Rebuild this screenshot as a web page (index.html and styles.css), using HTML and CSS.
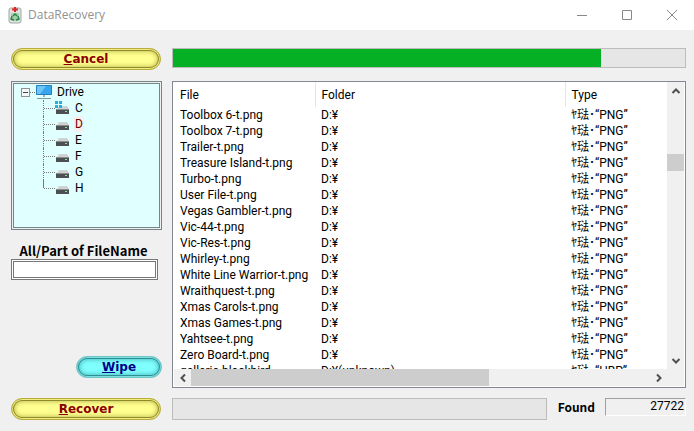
FILE: index.html
```html
<!DOCTYPE html>
<html lang="en">
<head>
    <meta charset="utf-8">
    <title>DataRecovery</title>
    <link rel="stylesheet" href="styles.css">
</head>
<body>
    <header class="titlebar">
        <svg class="app-icon" width="14" height="18" viewBox="0 0 14 18">
            <rect x="1" y="2" width="12" height="15" rx="2" fill="#dfe3df" stroke="#a0a6a1"/>
            <rect x="3" y="7" width="8" height="8" rx="1" fill="#a5cdaa"/>
            <path d="M5 10l2-2 2 2M10 10l1 3-3 1M6 14l-3-1 1-3" fill="none" stroke="#23834a" stroke-width="1.4"/>
            <path d="M7 1v5M4 3.500h6" stroke="#dc2626" stroke-width="2"/>
        </svg>
        <h1>DataRecovery</h1>
        <div class="window-buttons">
            <button aria-label="Minimize"><svg width="12" height="12" viewBox="0 0 12 12"><path d="M1 6.500h10"/></svg></button>
            <button aria-label="Maximize"><svg width="12" height="12" viewBox="0 0 12 12"><path d="M1.500 1.500h9v9h-9z"/></svg></button>
            <button aria-label="Close"><svg width="12" height="12" viewBox="0 0 12 12"><path d="M1 1l10 10M11 1L1 11"/></svg></button>
        </div>
    </header>

    <svg class="defs" width="0" height="0">
        <symbol id="disk" viewBox="0 0 16 14">
            <path d="M4 5h8l2 3H2z" fill="#cfd3d3"/>
            <path d="M1 8h13v5H1z" fill="#4c5052"/>
            <path d="M1 8h13v1H1z" fill="#888e90"/>
            <path d="M10 10h2v1h-2z" fill="#8fe0a0"/>
        </symbol>
    </svg>

    <main>
        <div class="side">
            <button class="pill yellow"><u>C</u>ancel</button>
            <div class="tree">
                <div class="root">
                    <button class="toggle" aria-label="Collapse"></button>
                    <span class="dots"></span>
                    <svg width="18" height="16" viewBox="0 0 18 16">
                        <path d="M1.500 1.500h15v9h-15z" fill="#38a5ed" stroke="#2580b8"/>
                        <path d="M2 2h9L5 10H2z" fill="#6fc6fa"/>
                        <path d="M8 11h2v2H8z" fill="#9fb2bb"/>
                        <path d="M2 14.500h14" stroke="#8098a2"/>
                    </svg>
                    <span class="name">Drive</span>
                </div>
                <ul>
                    <li><span class="dots"></span><svg width="16" height="14"><use href="#disk"/><path d="M0 0h3v3H0zM4 0h3v3H4zM0 4h3v3H0zM4 4h3v3H4z" fill="#25b0dc"/></svg><span class="name">C</span></li>
                    <li><span class="dots"></span><svg width="16" height="14"><use href="#disk"/></svg><span class="name hot">D</span></li>
                    <li><span class="dots"></span><svg width="16" height="14"><use href="#disk"/></svg><span class="name">E</span></li>
                    <li><span class="dots"></span><svg width="16" height="14"><use href="#disk"/></svg><span class="name">F</span></li>
                    <li><span class="dots"></span><svg width="16" height="14"><use href="#disk"/></svg><span class="name">G</span></li>
                    <li><span class="dots"></span><svg width="16" height="14"><use href="#disk"/></svg><span class="name">H</span></li>
                </ul>
            </div>
            <label class="filter-label" for="filter">All/Part of FileName</label>
            <input type="text" id="filter" class="filter">
            <button class="pill cyan"><u>W</u>ipe</button>
            <button class="pill yellow recover"><u>R</u>ecover</button>
        </div>

        <div class="content">
            <progress class="scan" value="83.5" max="100" aria-label="Scan progress"></progress>
            <div class="list">
                <div class="rows">
                    <table>
                        <thead>
                            <tr><th class="file">File</th><th class="folder">Folder</th><th>Type</th></tr>
                        </thead>
                        <tbody>
                            <tr><td>Toolbox 6-t.png</td><td>D:¥</td><td>ﾔ琺･“PNG”</td></tr>
                            <tr><td>Toolbox 7-t.png</td><td>D:¥</td><td>ﾔ琺･“PNG”</td></tr>
                            <tr><td>Trailer-t.png</td><td>D:¥</td><td>ﾔ琺･“PNG”</td></tr>
                            <tr><td>Treasure Island-t.png</td><td>D:¥</td><td>ﾔ琺･“PNG”</td></tr>
                            <tr><td>Turbo-t.png</td><td>D:¥</td><td>ﾔ琺･“PNG”</td></tr>
                            <tr><td>User File-t.png</td><td>D:¥</td><td>ﾔ琺･“PNG”</td></tr>
                            <tr><td>Vegas Gambler-t.png</td><td>D:¥</td><td>ﾔ琺･“PNG”</td></tr>
                            <tr><td>Vic-44-t.png</td><td>D:¥</td><td>ﾔ琺･“PNG”</td></tr>
                            <tr><td>Vic-Res-t.png</td><td>D:¥</td><td>ﾔ琺･“PNG”</td></tr>
                            <tr><td>Whirley-t.png</td><td>D:¥</td><td>ﾔ琺･“PNG”</td></tr>
                            <tr><td>White Line Warrior-t.png</td><td>D:¥</td><td>ﾔ琺･“PNG”</td></tr>
                            <tr><td>Wraithquest-t.png</td><td>D:¥</td><td>ﾔ琺･“PNG”</td></tr>
                            <tr><td>Xmas Carols-t.png</td><td>D:¥</td><td>ﾔ琺･“PNG”</td></tr>
                            <tr><td>Xmas Games-t.png</td><td>D:¥</td><td>ﾔ琺･“PNG”</td></tr>
                            <tr><td>Yahtsee-t.png</td><td>D:¥</td><td>ﾔ琺･“PNG”</td></tr>
                            <tr><td>Zero Board-t.png</td><td>D:¥</td><td>ﾔ琺･“PNG”</td></tr>
                            <tr><td>galleria blackbird</td><td>D:¥(unknown)</td><td>ﾔ琺･“HBP”</td></tr>
                        </tbody>
                    </table>
                </div>
                <div class="vbar">
                    <button aria-label="Scroll up"><svg width="10" height="10" viewBox="0 0 10 10"><path d="M1.500 7L5 3.500 8.500 7"/></svg></button>
                    <div class="track"><div class="thumb"></div></div>
                    <button aria-label="Scroll down"><svg width="10" height="10" viewBox="0 0 10 10"><path d="M1.500 3L5 6.500 8.500 3"/></svg></button>
                </div>
                <div class="hbar">
                    <button aria-label="Scroll left"><svg width="10" height="10" viewBox="0 0 10 10"><path d="M7 1.500L3.500 5 7 8.500"/></svg></button>
                    <div class="track"><div class="thumb"></div></div>
                    <button aria-label="Scroll right"><svg width="10" height="10" viewBox="0 0 10 10"><path d="M3 1.500L6.500 5 3 8.500"/></svg></button>
                </div>
            </div>
            <div class="status">
                <progress value="0" max="100" aria-label="Recovery progress"></progress>
                <label for="found">Found</label>
                <output id="found">27722</output>
            </div>
        </div>
    </main>
</body>
</html>
```
FILE: styles.css
```css
* { box-sizing: border-box; }
body { margin: 0; min-height: 100vh; display: flex; flex-direction: column; background: #f0f0f0; color: #000; font: 12px/16px Roboto, "Noto Sans CJK JP", sans-serif; }
button { font: inherit; padding: 0; border: none; background: none; }
svg { display: block; flex: none; }
.defs { position: absolute; }

.titlebar { display: flex; align-items: center; height: 30px; padding-left: 8px; background: #fff; }
.titlebar h1 { flex: 1; margin: 0 0 0 6px; font: 12px/16px "Open Sans", sans-serif; color: #929292; }
.window-buttons { display: flex; }
.window-buttons button { width: 45px; height: 30px; display: flex; align-items: center; justify-content: center; }
.window-buttons path { fill: none; stroke: #888; }

main { flex: 1; display: flex; gap: 10px; padding: 18px 8px 11px 11px; }
.side { width: 151px; display: flex; flex-direction: column; }
.pill { height: 22px; border: 1px solid #b8ac3c; border-radius: 11px; font: bold 12px/18px "DejaVu Sans", sans-serif; }
.yellow { width: 150px; color: #8b0000; background: #ffff90; box-shadow: inset 0 0 0 1px #f0ec80, inset 0 0 0 2px #8f8a2c, inset 0 0 4px 3px #c8c458; }
.cyan { width: 86px; margin: auto 0 0; align-self: flex-end; color: #00008b; background: #80ffff; border-color: #6fc4c6; box-shadow: inset 0 0 0 1px #7fdede, inset 0 0 0 2px #2c8f92, inset 0 0 4px 3px #50c4c8; }
.recover { margin-top: 20px; }

.tree { height: 149px; margin-top: 11px; padding: 0 0 0 7px; border: 3px double #75868a; background: #e0ffff padding-box; }
.root, .tree li { display: flex; align-items: center; height: 16px; }
.toggle { width: 9px; height: 9px; border: 1px solid #929292; background: linear-gradient(#444, #444) center / 5px 1px no-repeat #f4f8f8; }
.dots { width: 5px; border-top: 1px dotted #777; }
.name { margin-left: 4px; }
.tree ul { margin: 0 0 0 22px; padding: 0; list-style: none; }
.tree li { border-left: 1px dotted #777; }
.tree li:last-child { border-image: linear-gradient(#777 50%, transparent 50%) 1; }
.tree li .dots { width: 11px; }
.tree li .name { margin-left: 3px; padding: 0 1px; }
.tree .hot { color: #700000; background: #f4f0f0; }

.filter-label { margin-top: 13px; padding-right: 6px; text-align: center; font: bold 13px/16px "Noto Sans CJK JP", sans-serif; }
.filter { width: 147px; height: 21px; border: 3px double #777; background: #fff; font: inherit; }

.content { flex: 1; min-width: 0; display: flex; flex-direction: column; }
progress { appearance: none; display: block; border: 1px solid #bcbcbc; background: #e6e6e6; }
progress::-webkit-progress-bar { background: #e6e6e6; }
progress::-webkit-progress-value { background: #06b025; }
.scan { width: 100%; height: 20px; }

.list { flex: 1; min-height: 0; margin-top: 13px; display: grid; grid-template-columns: 1fr 17px; grid-template-rows: 1fr 17px; border: 1px solid #828790; padding: 0 1px 1px; background: #fff; }
.rows { overflow: hidden; height: 287px; }
table { width: 100%; table-layout: fixed; border-collapse: collapse; }
th, td { padding: 0 0 0 6px; text-align: left; font-weight: normal; white-space: nowrap; }
th { height: 25px; border-right: 1px solid #e5e5e5; }
th:last-child { border-right: none; }
td { height: 16px; }
.file { width: 141px; }
.folder { width: 250px; }
.vbar, .hbar { display: flex; background: #f0f0f0; }
.vbar { flex-direction: column; grid-row: 1 / 3; grid-column: 2; padding-bottom: 17px; }
.vbar button, .hbar button { width: 17px; height: 17px; display: flex; align-items: center; justify-content: center; }
.vbar path, .hbar path { fill: none; stroke: #505050; stroke-width: 2; }
.track { flex: 1; }
.thumb { background: #cdcdcd; }
.vbar .track { padding-top: 55px; }
.vbar .thumb { height: 17px; }
.hbar .thumb { width: 65%; height: 100%; }

.status { display: flex; align-items: flex-start; margin-top: 10px; }
.status progress { flex: 1; min-width: 0; height: 22px; }
.status label { margin: 0 10px 0 11px; font: bold 12px/18px "Noto Sans CJK JP", sans-serif; }
.status output { width: 81px; height: 18px; line-height: 14px; text-align: right; padding-right: 1px; border: 1px solid; border-color: #a0a0a0 #fff #fff #a0a0a0; }
```
